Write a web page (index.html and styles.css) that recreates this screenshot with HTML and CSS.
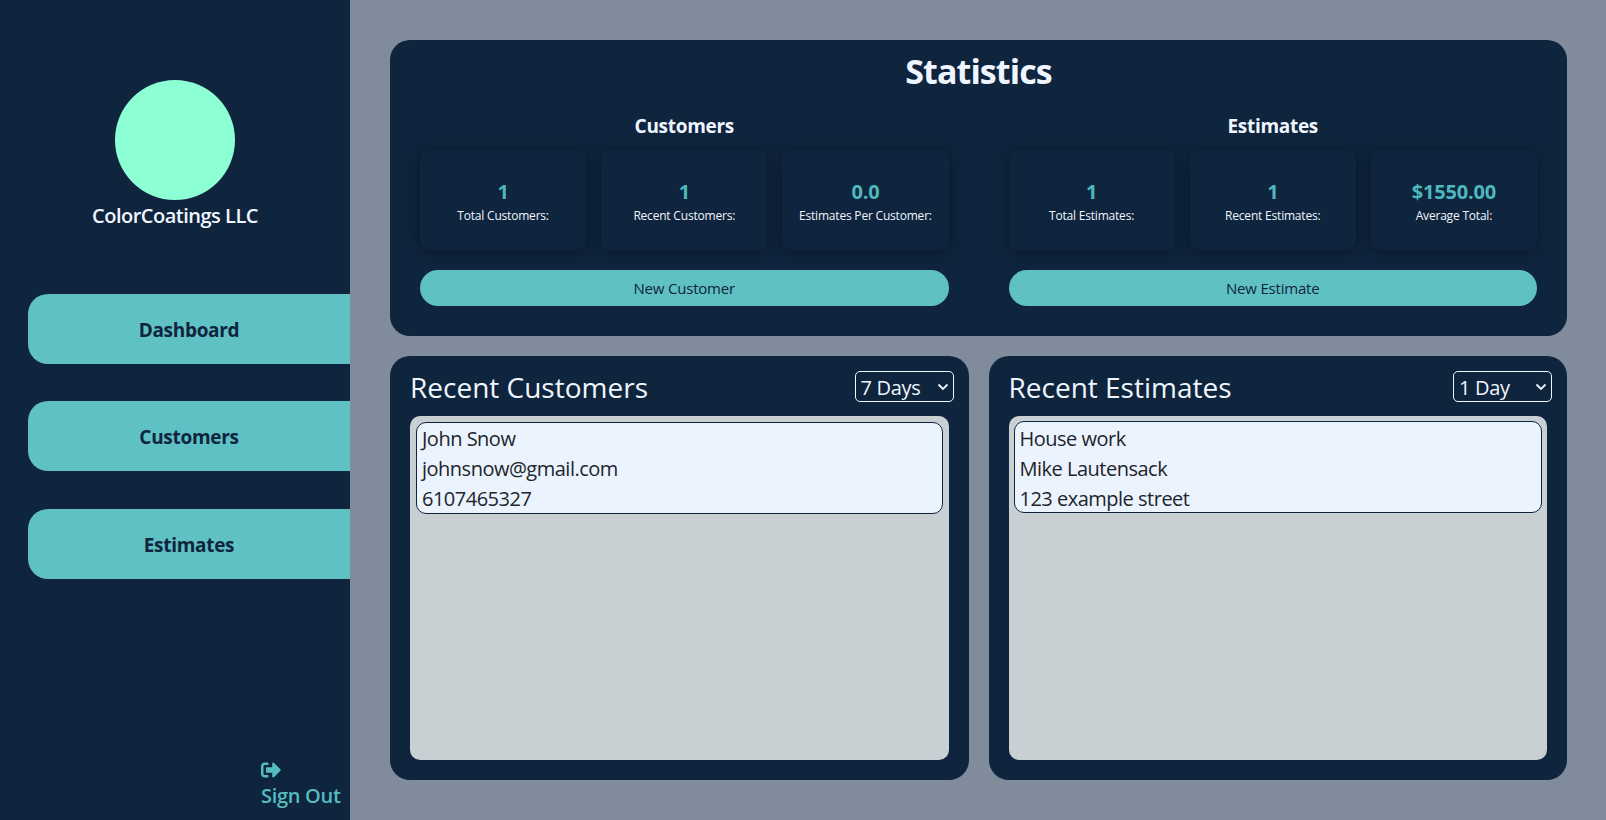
FILE: index.html
```html
<!DOCTYPE html>
<html lang="en">
<head>
  <meta charset="UTF-8">
  <title>Dashboard</title>
  <link rel="stylesheet" href="styles.css">
</head>
<body>
  <div class="sidebar">
    <div class="logo"></div>
    <div class="company">ColorCoatings LLC</div>
    <div class="nav">
      <a class="nav-item" href="#">Dashboard</a>
      <a class="nav-item" href="#">Customers</a>
      <a class="nav-item" href="#">Estimates</a>
    </div>
    <a class="signout" href="#">
      <svg class="signout-icon" viewBox="0 0 512 512"><path d="M497 273L329 441c-15 15-41 4.500-41-17v-96H152c-13.300 0-24-10.700-24-24v-96c0-13.300 10.700-24 24-24h136V88c0-21.400 25.900-32 41-17l168 168c9.300 9.400 9.300 24.600 0 34zM192 436v-40c0-6.600-5.400-12-12-12H96c-17.700 0-32-14.300-32-32V160c0-17.700 14.300-32 32-32h84c6.600 0 12-5.400 12-12V76c0-6.600-5.400-12-12-12H96c-53 0-96 43-96 96v192c0 53 43 96 96 96h84c6.600 0 12-5.400 12-12z"/></svg>
      <span>Sign Out</span>
    </a>
  </div>

  <div class="main">
    <div class="panel stats">
      <h1>Statistics</h1>
      <div class="stats-cols">
        <div class="stats-col">
          <h3>Customers</h3>
          <div class="cards">
            <div class="card"><div class="value">1</div><div class="label">Total Customers:</div></div>
            <div class="card"><div class="value">1</div><div class="label">Recent Customers:</div></div>
            <div class="card"><div class="value">0.0</div><div class="label">Estimates Per Customer:</div></div>
          </div>
          <button class="new-btn">New Customer</button>
        </div>
        <div class="stats-col">
          <h3>Estimates</h3>
          <div class="cards">
            <div class="card"><div class="value">1</div><div class="label">Total Estimates:</div></div>
            <div class="card"><div class="value">1</div><div class="label">Recent Estimates:</div></div>
            <div class="card"><div class="value">$1550.00</div><div class="label">Average Total:</div></div>
          </div>
          <button class="new-btn">New Estimate</button>
        </div>
      </div>
    </div>

    <div class="recent-row">
      <div class="panel recent">
        <div class="recent-head">
          <h2>Recent Customers</h2>
          <select class="range">
            <option>7 Days</option>
            <option>1 Day</option>
            <option>30 Days</option>
          </select>
        </div>
        <div class="list">
          <div class="list-item">
            <div>John Snow</div>
            <div>johnsnow@gmail.com</div>
            <div>6107465327</div>
          </div>
        </div>
      </div>
      <div class="panel recent">
        <div class="recent-head">
          <h2>Recent Estimates</h2>
          <select class="range">
            <option>1 Day</option>
            <option>7 Days</option>
            <option>30 Days</option>
          </select>
        </div>
        <div class="list list-tight">
          <div class="list-item">
            <div>House work</div>
            <div>Mike Lautensack</div>
            <div>123 example street</div>
          </div>
        </div>
      </div>
    </div>
  </div>
</body>
</html>
```

FILE: styles.css
```css
* {
  box-sizing: border-box;
}
body {
  margin: 0;
  height: 100vh;
  display: flex;
  overflow: hidden;
  font-family: "Open Sans", "Noto Sans", sans-serif;
  background: #808b9b;
  color: #f0f6ff;
}
a {
  text-decoration: none;
}

/* sidebar */
.sidebar {
  width: 350px;
  flex-shrink: 0;
  background: #0f243d;
  display: flex;
  flex-direction: column;
  padding-top: 80px;
}
.logo {
  width: 120px;
  height: 120px;
  border-radius: 50%;
  background: #8cffd5;
  align-self: center;
}
.company {
  margin-top: 3px;
  margin-bottom: 1px;
  text-align: center;
  font-size: 20px;
  font-weight: 600;
  line-height: 25px;
  letter-spacing: -0.5px;
}
.nav {
  margin-top: 65px;
  display: flex;
  flex-direction: column;
  gap: 37.4px;
  padding-left: 28px;
}
.nav-item {
  height: 70px;
  padding-top: 2px;
  display: flex;
  align-items: center;
  justify-content: center;
  background: #5fc1c3;
  color: #0f243d;
  border-radius: 20px 0 0 20px;
  font-size: 19px;
  font-weight: 700;
  letter-spacing: -0.3px;
}
.signout {
  margin-top: auto;
  align-self: flex-end;
  width: 89px;
  padding-bottom: 10px;
  color: #55bcc1;
  font-size: 20px;
  font-weight: 600;
  line-height: 29px;
  letter-spacing: -0.3px;
}
.signout-icon {
  display: block;
  width: 20px;
  height: 20px;
  margin-bottom: 1px;
  fill: #55bcc1;
}

/* main area */
.main {
  flex: 1;
  padding: 40px 39px 40px 40px;
  display: flex;
  flex-direction: column;
  gap: 20px;
}
.panel {
  background: #0f243d;
  border-radius: 20px;
}
.stats {
  height: 296px;
  padding: 10px 30px 0;
}
h1 {
  margin: 0;
  text-align: center;
  font-size: 34px;
  font-weight: 700;
  line-height: 42px;
  letter-spacing: -0.9px;
}
.stats-cols {
  margin-top: 18px;
  display: flex;
  gap: 60px;
}
.stats-col {
  flex: 1;
  min-width: 0;
}
h3 {
  margin: 0 0 10px;
  padding-top: 1px;
  height: 30px;
  text-align: center;
  font-size: 19px;
  font-weight: 700;
  line-height: 30px;
  letter-spacing: -0.3px;
}
.cards {
  display: flex;
  gap: 15px;
}
.card {
  flex: 1;
  min-width: 0;
  height: 100px;
  padding-top: 3px;
  display: flex;
  flex-direction: column;
  align-items: center;
  justify-content: center;
  border-radius: 10px;
  background: #0f243d;
  box-shadow: 0 2px 15px rgba(0,0,0,0.35);
}
.value {
  color: #4db8bd;
  font-size: 20px;
  font-weight: 700;
  line-height: 26px;
  letter-spacing: -0.2px;
}
.label {
  margin-top: 2px;
  font-size: 12px;
  line-height: 18px;
  letter-spacing: -0.2px;
}
.new-btn {
  display: block;
  width: 100%;
  height: 36px;
  margin-top: 20px;
  background: #5fc1c3;
  color: #0f243d;
  border: none;
  border-radius: 18px;
  font-family: inherit;
  font-size: 15px;
  letter-spacing: -0.2px;
  cursor: pointer;
}

.recent-row {
  flex: 1;
  display: flex;
  gap: 20px;
  min-height: 0;
}
.recent {
  flex: 1;
  min-width: 0;
  display: flex;
  flex-direction: column;
  padding: 15px 15px 20px 20px;
}
.recent-head {
  height: 31px;
  margin-bottom: 14px;
  display: flex;
  align-items: center;
  justify-content: space-between;
}
h2 {
  margin: 0;
  font-size: 28px;
  font-weight: 400;
}
.range {
  appearance: none;
  width: 99px;
  height: 31px;
  padding: 2px 5px 0;
  background: transparent url("data:image/svg+xml,%3Csvg xmlns='http://www.w3.org/2000/svg' viewBox='0 0 12 8'%3E%3Cpath d='M1.500 1.500L6 6l4.500-4.500' fill='none' stroke='%23f0f6ff' stroke-width='1.800'/%3E%3C/svg%3E") no-repeat right 4px center / 12px 8px;
  color: #f0f6ff;
  border: 1px solid #f0f6ff;
  border-radius: 5px;
  font-family: inherit;
  font-size: 20px;
  letter-spacing: -0.3px;
}
.list {
  flex: 1;
  margin-right: 5px;
  background: #c8d0d3;
  border-radius: 10px;
  padding: 6px;
}
.list-tight {
  padding: 5px;
}
.list-item {
  height: 92px;
  padding: 1px 5px 0;
  background: #ebf3ff;
  border: 1px solid #0f243d;
  border-radius: 10px;
  color: #212529;
  font-size: 20px;
  line-height: 30px;
  letter-spacing: -0.5px;
}
.list-tight .list-item {
  padding-top: 1.5px;
}
```
